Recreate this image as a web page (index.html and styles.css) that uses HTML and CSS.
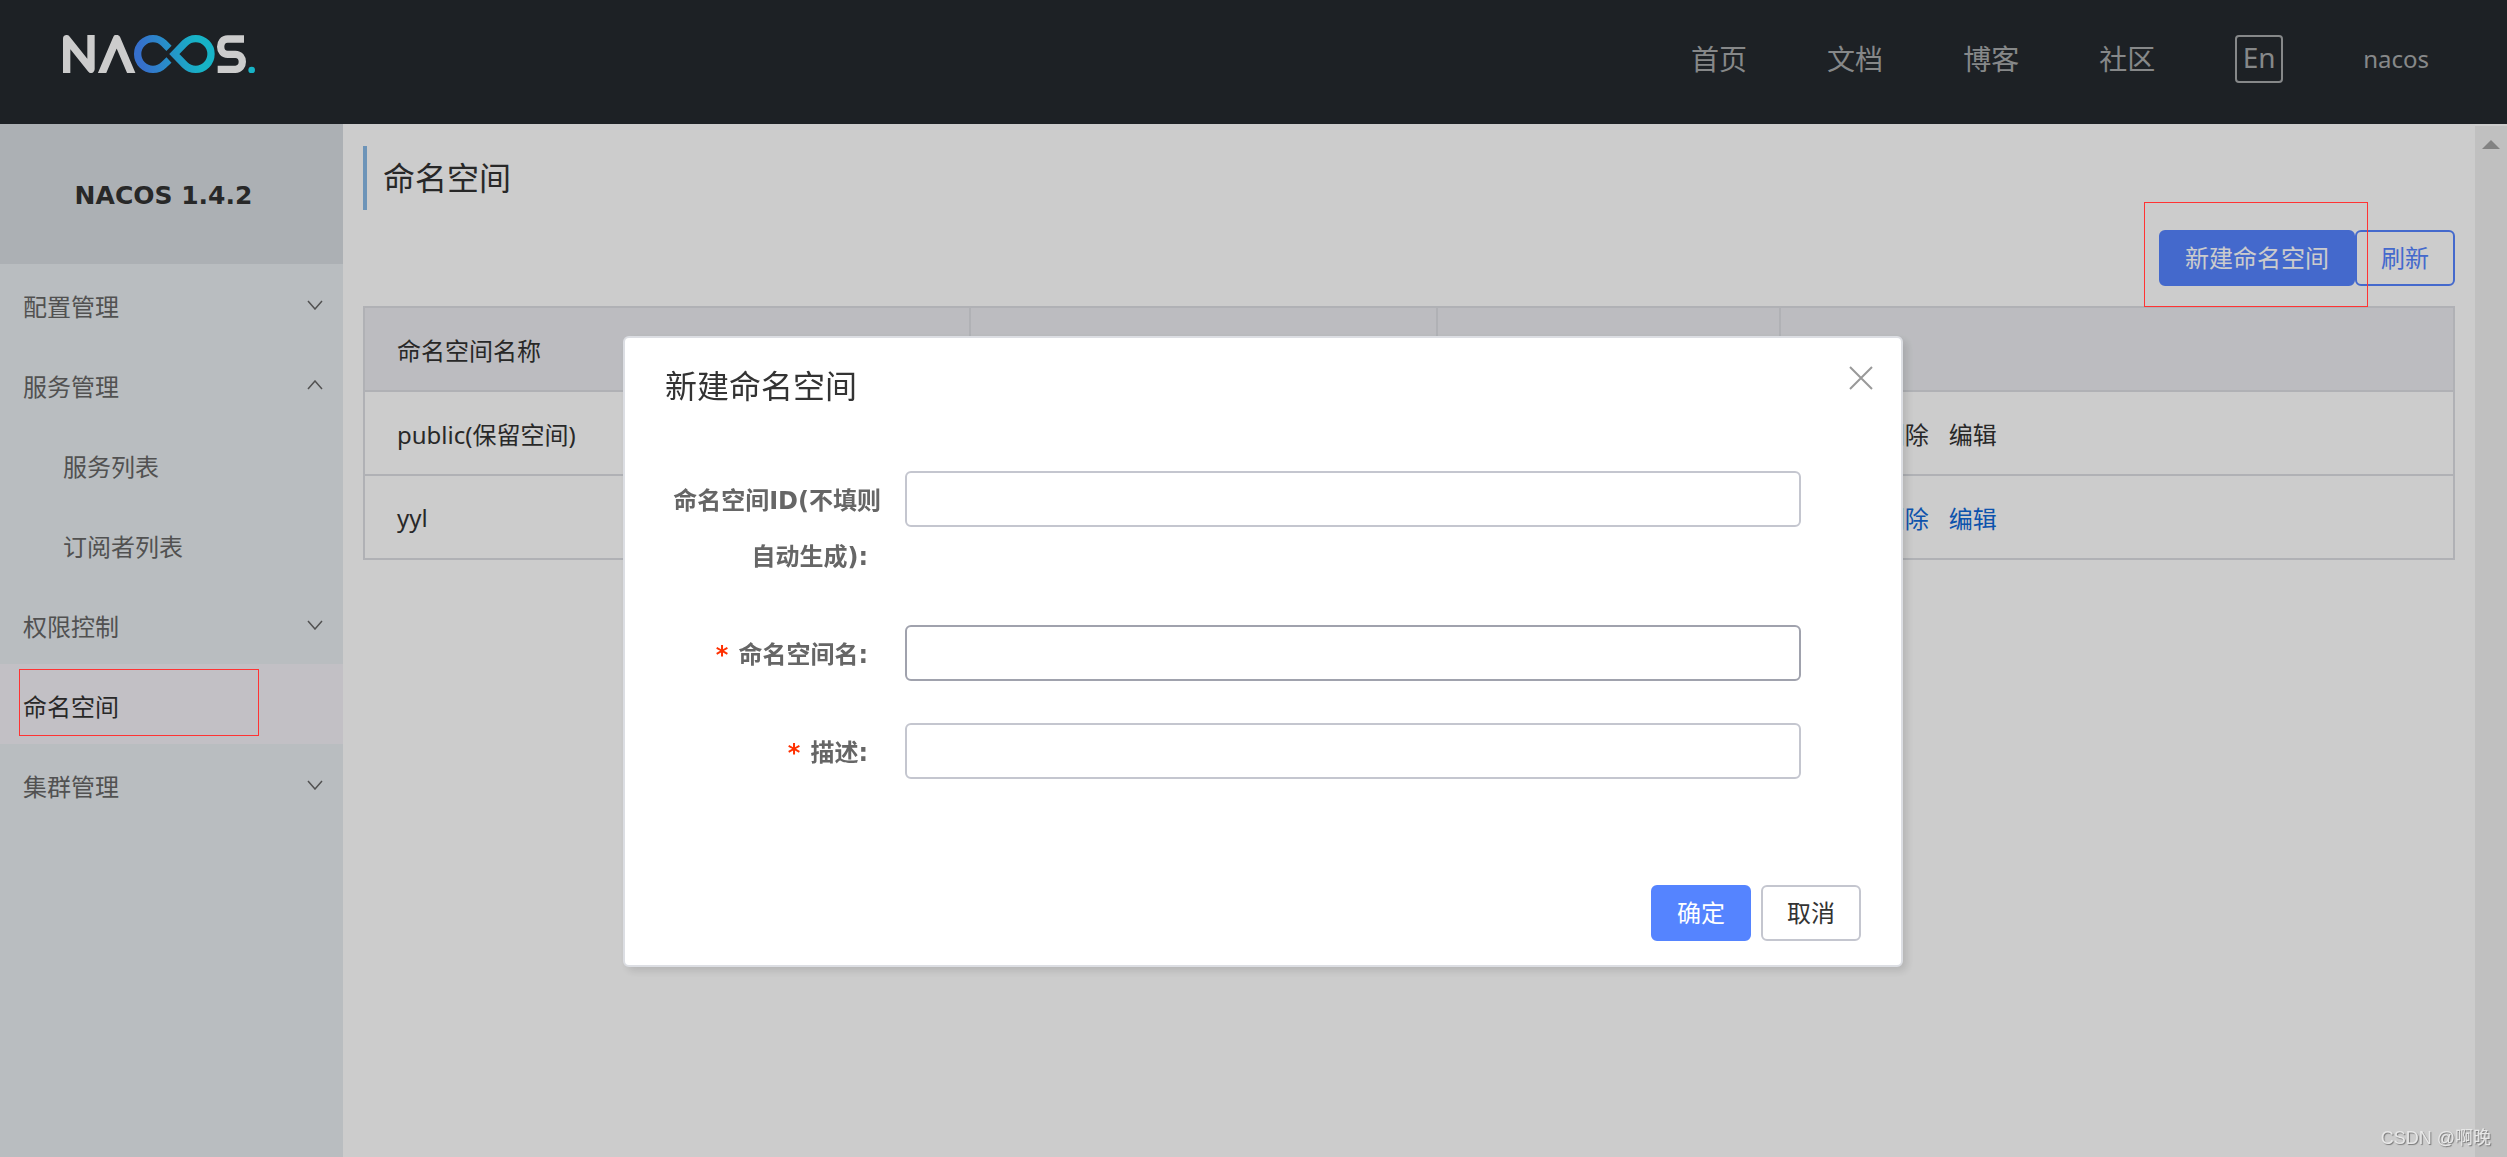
FILE: index.html
```html
<!DOCTYPE html>
<html lang="zh-CN">
<head>
<meta charset="utf-8">
<title>Nacos</title>
<link rel="stylesheet" href="styles.css">
</head>
<body>
<header class="topbar">
  <a class="logo" href="#" aria-label="Nacos">
    <svg viewBox="189 105 579 114" width="193" height="38" fill="none" stroke="#fff" stroke-width="22">
      <defs>
        <linearGradient id="loop" gradientUnits="userSpaceOnUse" x1="402" y1="190" x2="642" y2="150">
          <stop offset="0.1" stop-color="#448cff"/>
          <stop offset="0.8" stop-color="#1de0f8"/>
        </linearGradient>
      </defs>
      <path stroke-linejoin="round" d="M200 222V116L273 208V102"/>
      <path stroke-linejoin="round" stroke-width="23" d="M302 229L350 116L398 229"/>
      <path stroke="url(#loop)" d="M507 145L491.500 129.500A46 46 0 1 0 491.500 194.500L507 180"/>
      <path stroke="url(#loop)" d="M523 162L554.500 129.500A46 46 0 1 1 554.500 194.500Z"/>
      <path d="M732 117H683C655 117 655 163 683 163H706C734 163 734 208 706 208H653"/>
      <circle cx="755" cy="210" r="10" fill="#1de0f8" stroke="none"/>
    </svg>
  </a>
  <nav class="nav">
    <a href="#">首页</a>
    <a href="#">文档</a>
    <a href="#">博客</a>
    <a href="#">社区</a>
    <button class="lang" type="button">En</button>
    <a class="user" href="#">nacos</a>
  </nav>
</header>

<div class="layout">
  <aside class="sidebar">
    <h1 class="version">NACOS 1.4.2</h1>
    <ul class="menu">
      <li><a href="#">配置管理<svg class="chevron" viewBox="0 0 16 10"><path d="M1 1L8 9L15 1"/></svg></a></li>
      <li>
        <a href="#">服务管理<svg class="chevron" viewBox="0 0 16 10"><path d="M1 9L8 1L15 9"/></svg></a>
        <ul class="submenu">
          <li><a href="#">服务列表</a></li>
          <li><a href="#">订阅者列表</a></li>
        </ul>
      </li>
      <li><a href="#">权限控制<svg class="chevron" viewBox="0 0 16 10"><path d="M1 1L8 9L15 1"/></svg></a></li>
      <li><a class="active" href="#">命名空间</a></li>
      <li><a href="#">集群管理<svg class="chevron" viewBox="0 0 16 10"><path d="M1 1L8 9L15 1"/></svg></a></li>
    </ul>
  </aside>

  <main class="content">
    <h2 class="page-title">命名空间</h2>
    <div class="toolbar">
      <button class="btn primary marked" type="button">新建命名空间</button>
      <button class="btn outline" type="button">刷新</button>
    </div>
    <table class="table">
      <colgroup><col class="col-name"><col class="col-id"><col class="col-count"><col></colgroup>
      <thead>
        <tr><th>命名空间名称</th><th></th><th></th><th></th></tr>
      </thead>
      <tbody>
        <tr>
          <td>public(保留空间)</td><td></td><td></td>
          <td><div class="actions"><span>详情</span><span>删除</span><span>编辑</span></div></td>
        </tr>
        <tr>
          <td>yyl</td><td></td><td></td>
          <td><div class="actions"><a href="#">详情</a><a href="#">删除</a><a href="#">编辑</a></div></td>
        </tr>
      </tbody>
    </table>
  </main>
  <div class="scroll-track"><svg viewBox="0 0 18 9"><path d="M9 0L18 9H0Z"/></svg></div>
</div>

<div class="overlay">
  <section class="dialog" role="dialog" aria-modal="true" aria-labelledby="dialog-title">
    <header class="dialog-head">
      <h2 id="dialog-title">新建命名空间</h2>
      <button class="close" type="button" aria-label="关闭">
        <svg viewBox="0 0 24 24"><path d="M1 1L23 23M23 1L1 23"/></svg>
      </button>
    </header>
    <form>
      <div class="field">
        <label for="ns-id">命名空间ID(不填则自动生成)</label>
        <input id="ns-id" type="text">
      </div>
      <div class="field required">
        <label for="ns-name">命名空间名</label>
        <input id="ns-name" class="hover" type="text">
      </div>
      <div class="field required">
        <label for="ns-desc">描述</label>
        <input id="ns-desc" type="text">
      </div>
      <footer class="dialog-foot">
        <button class="btn primary" type="submit">确定</button>
        <button class="btn" type="button">取消</button>
      </footer>
    </form>
  </section>
</div>
<div class="watermark">CSDN @啊晚</div>
</body>
</html>
```
FILE: styles.css
```css
*,
*::before,
*::after {
  box-sizing: border-box;
}

body {
  margin: 0;
  height: 100vh;
  overflow: hidden;
  display: flex;
  flex-direction: column;
  background: #fff;
  color: #333;
  font-family: "Noto Sans", "Noto Sans CJK SC", sans-serif;
  font-size: 24px;
}

h1, h2, ul {
  margin: 0;
  padding: 0;
}

ul {
  list-style: none;
}

a {
  text-decoration: none;
}

button, input {
  font: inherit;
}

/* Top bar */
.topbar {
  flex: none;
  display: flex;
  justify-content: space-between;
  align-items: flex-start;
  height: 124px;
  padding: 34px 78px 0 63px;
  background: #252a2f;
}

.logo svg {
  display: block;
  margin-top: 1px;
}

.nav {
  display: flex;
  align-items: center;
  gap: 80px;
  line-height: 48px;
}

.nav a {
  padding-top: 1px;
  color: #a8aaac;
  font-size: 28px;
}

.nav .user {
  font-size: 24px;
}

.lang {
  width: 48px;
  height: 48px;
  padding: 0 0 4px;
  border: 2px solid #a8aaac;
  border-radius: 4px;
  background: none;
  color: #a8aaac;
  font-size: 28px;
  line-height: 40px;
}

/* Sidebar */
.layout {
  flex: 1;
  display: flex;
  min-height: 0;
}

.sidebar {
  flex: none;
  width: 343px;
  background: #e8edf0;
}

.version {
  height: 140px;
  padding: 2px 16px 0 0;
  background: #d8dde2;
  font: bold 25px/140px "DejaVu Sans", sans-serif;
  text-align: center;
}

.menu a {
  display: flex;
  align-items: center;
  justify-content: space-between;
  height: 80px;
  padding: 2px 20px 0 23px;
  color: #666;
}

.menu .submenu a {
  padding-left: 63px;
}

.menu .active {
  position: relative;
  background: #f3f1f7;
  color: #333;
}

.active::after,
.marked::after {
  content: "";
  position: absolute;
  z-index: 20;
  border: 1px solid #ff3333;
  pointer-events: none;
}

.active::after {
  inset: 5px auto auto 19px;
  width: 240px;
  height: 67px;
}

.chevron {
  width: 16px;
  height: 10px;
  fill: none;
  stroke: #666;
  stroke-width: 1.5;
}

/* Content */
.content {
  flex: 1;
  min-width: 0;
  padding: 22px 20px;
}

.page-title {
  height: 64px;
  padding-left: 16px;
  border-left: 4px solid #89b9e7;
  font-size: 32px;
  font-weight: 400;
  line-height: 64px;
}

.toolbar {
  display: flex;
  justify-content: flex-end;
  margin: 20px 0;
}

.btn {
  position: relative;
  height: 56px;
  padding: 0 24px;
  border: 2px solid #c4c6cf;
  border-radius: 6px;
  background: #fff;
  color: #333;
  line-height: 52px;
}

.btn.primary {
  border-color: #5584ff;
  background: #5584ff;
  color: #fff;
}

.btn.outline {
  border-color: #5584ff;
  color: #5584ff;
}

.marked::after {
  inset: -30px -15px -23px -17px;
}

.table {
  width: 100%;
  table-layout: fixed;
  border: 2px solid #dcdee3;
  border-spacing: 0;
}

.col-name {
  width: 29%;
}

.col-id {
  width: 22.4%;
}

.col-count {
  width: 16.4%;
}

.table th,
.table td {
  height: 84px;
  padding: 0 32px;
  border-bottom: 2px solid #dcdee3;
  font-weight: 400;
  text-align: left;
}

.table th {
  background: #ebecf0;
}

.table th:not(:last-child) {
  border-right: 2px solid #dcdee3;
}

.table tbody tr:last-child td {
  height: 82px;
  border-bottom: 0;
}

.actions {
  display: flex;
  gap: 20px;
}

.actions a {
  color: #1068d8;
}

.scroll-track {
  flex: none;
  width: 32px;
  margin-top: 2px;
  padding: 14px 7px;
  background: #f1f1f1;
}

.scroll-track svg {
  display: block;
  width: 18px;
  height: 9px;
  fill: #a3a3a3;
}

/* Dialog */
.overlay {
  position: fixed;
  inset: 0;
  z-index: 10;
  display: flex;
  justify-content: center;
  align-items: flex-start;
  padding: 336px 0 0 19px;
  background: rgba(0, 0, 0, 0.2);
}

.dialog {
  width: 1280px;
  max-width: 90%;
  padding: 24px 40px;
  border: 2px solid #dcdee3;
  border-radius: 6px;
  background: #fff;
  box-shadow: 4px 4px 8px rgba(0, 0, 0, 0.12);
}

.dialog-head {
  display: flex;
  justify-content: space-between;
  align-items: flex-start;
  margin-bottom: 61px;
}

.dialog-head h2 {
  font-size: 32px;
  font-weight: 400;
  line-height: 48px;
}

.close {
  width: 24px;
  height: 24px;
  margin: 4px -12px 0 0;
  padding: 0;
  border: 0;
  background: none;
}

.close svg {
  display: block;
  fill: none;
  stroke: #999;
  stroke-width: 2;
}

.field {
  display: grid;
  grid-template-columns: 240px 15fr 1fr;
  align-items: start;
  margin-bottom: 42px;
}

.field label {
  margin-bottom: -2px;
  padding: 2px 24px 0 0;
  color: #666;
  font-family: "DejaVu Sans", "Noto Sans CJK SC", sans-serif;
  font-weight: 700;
  line-height: 56px;
  text-align: right;
}

.field label::after {
  content: ":";
  margin-right: 13px;
}

.required label::before {
  content: "*";
  margin-right: 10px;
  color: #ff3000;
}

.field input {
  width: 100%;
  height: 56px;
  padding: 0 16px;
  border: 2px solid #c4c6cf;
  border-radius: 6px;
  background: #fff;
}

.field .hover {
  border-color: #a0a2ad;
}

.dialog-foot {
  display: flex;
  justify-content: flex-end;
  gap: 10px;
  margin-top: 106px;
}

.watermark {
  position: fixed;
  right: 16px;
  bottom: 7px;
  z-index: 30;
  color: #e8e8e8;
  font: 18px/24px "Liberation Sans", "Noto Sans CJK SC", sans-serif;
  text-shadow: 1px 1px 1px #777;
}
```
